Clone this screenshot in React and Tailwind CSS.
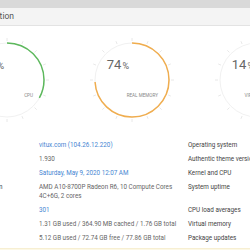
const gauges = [
  { value: 33, label: "CPU", color: "#5cb85c" },
  { value: 74, label: "REAL MEMORY", color: "#f0ad4e" },
  { value: 14, label: "VIRTUAL MEMORY", color: "#5bc0de" },
];

const rows = [
  { label: "System hostname", value: "vitux.com (104.26.12.220)", link: true, right: "Operating system" },
  { label: "Webmin version", value: "1.930", right: "Authentic theme version" },
  { label: "Time on system", value: "Saturday, May 9, 2020 12:07 AM", link: true, right: "Kernel and CPU" },
  { label: "Processor information", value: "AMD A10-8700P Radeon R6, 10 Compute Cores 4C+6G, 2 cores", right: "System uptime" },
  { label: "Running processes", value: "301", link: true, right: "CPU load averages" },
  { label: "Real memory", value: "1.31 GB used / 364.90 MB cached / 1.76 GB total", right: "Virtual memory" },
  { label: "Local disk space", value: "5.12 GB used / 72.74 GB free / 77.86 GB total", right: "Package updates" },
];

const Gauge = ({ value, label, color }) => {
  const r = 37;
  const c = 2 * Math.PI * r;
  const ticks = Array.from({ length: 16 }, (_, i) => (i * 22.5 * Math.PI) / 180);
  return (
    <svg width="90" height="90" viewBox="0 0 90 90">
      <circle cx="45" cy="45" r={r} fill="none" stroke="#f1f1f1" strokeWidth="1" />
      <circle
        cx="45"
        cy="45"
        r={r}
        fill="none"
        stroke={color}
        strokeWidth="1.5"
        strokeDasharray={`${(c * value) / 100} ${c}`}
        transform="rotate(-90 45 45)"
      />
      {ticks.map((a, i) => (
        <line
          key={i}
          x1={45 + 39 * Math.sin(a)}
          y1={45 - 39 * Math.cos(a)}
          x2={45 + 42 * Math.sin(a)}
          y2={45 - 42 * Math.cos(a)}
          stroke="#e2e2e2"
          strokeWidth="0.8"
        />
      ))}
      <text x="42" y="34" textAnchor="end" fill="#666" fontFamily="Roboto, sans-serif">
        <tspan fontSize="13">{value}</tspan>
        <tspan fontSize="9" dx="1">%</tspan>
      </text>
      <text x="71" y="62" textAnchor="end" fill="#888" fontSize="4.6" fontFamily="Roboto, sans-serif">
        {label}
      </text>
    </svg>
  );
};

const App = () => {
  return (
    <div className="w-[250px] h-[250px] overflow-hidden bg-white font-['Roboto',sans-serif] flex flex-col">
      <div className="h-[8px] bg-[#d9d9d9] shrink-0" />
      <div className="h-[18px] shrink-0 bg-[#f4f4f4] border-b border-[#e3e3e3] flex items-center">
        <div className="w-[14px] shrink-0 flex justify-end">
          <span className="whitespace-nowrap text-[8.5px] text-[#555]">System Information</span>
        </div>
      </div>

      <div className="flex ml-[-56px] mt-[9px] shrink-0">
        {gauges.map((g) => (
          <div key={g.label} className="w-[125px] shrink-0 flex justify-center">
            <Gauge {...g} />
          </div>
        ))}
      </div>

      <div className="ml-[-60px] mt-[13px] flex flex-col text-[6.3px] leading-[9px] shrink-0">
        {rows.map((row) => (
          <div key={row.label} className="flex items-start py-[2.5px]">
            <div className="w-[99px] shrink-0 whitespace-nowrap text-[#444]">{row.label}</div>
            <div className="w-[149px] shrink-0 pr-[5px]">
              {row.link ? (
                <a className="text-[#4686d2]">{row.value}</a>
              ) : (
                <span className="text-[#666]">{row.value}</span>
              )}
            </div>
            <div className="w-[120px] shrink-0 whitespace-nowrap text-[#444]">{row.right}</div>
          </div>
        ))}
      </div>

      <div className="mt-[3px] flex-1 bg-[#fcf8e6] border-t border-[#f7efd2]" />
    </div>
  );
};

export default App;
